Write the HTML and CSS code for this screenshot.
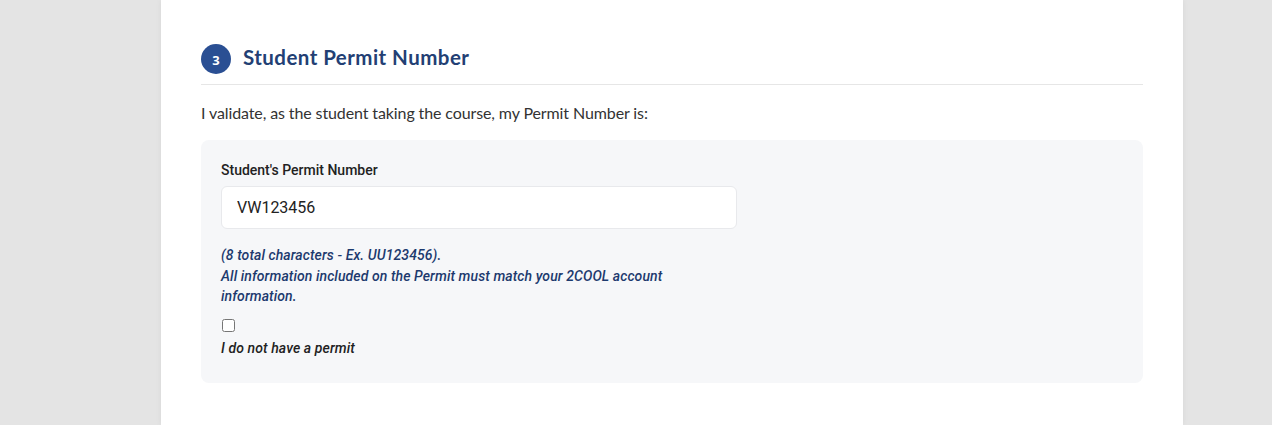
FILE: index.html
```html
<!DOCTYPE html>
<html>
<head>
<meta charset="utf-8">
<link rel="stylesheet" href="styles.css">
</head>
<body>
<div class="page">
  <div class="card">
    <div class="section-head">
      <span class="step">3</span>
      <h2 class="title">Student Permit Number</h2>
    </div>
    <p class="intro">I validate, as the student taking the course, my Permit Number is:</p>
    <div class="panel">
      <label class="field-label" for="permit">Student's Permit Number</label>
      <input class="field-input" id="permit" type="text" value="VW123456">
      <p class="help">(8 total characters - Ex. UU123456).<br>All information included on the Permit must match your 2COOL account information.</p>
      <div class="check-wrap">
        <input class="check" type="checkbox" id="nopermit">
        <label class="check-label" for="nopermit">I do not have a permit</label>
      </div>
    </div>
  </div>
</div>
</body>
</html>
```
FILE: styles.css
```css
html, body {
  margin: 0;
  padding: 0;
  background: #e4e4e4;
}
.page {
  display: flex;
  justify-content: flex-start;
  padding-left: 161px;
  min-height: 425px;
}
.card {
  width: 942px;
  background: #fff;
  padding: 44px 40px 40px;
  box-shadow: 0 0 6px rgba(0,0,0,0.06);
  min-height: 341px;
}
.section-head {
  display: flex;
  align-items: center;
  gap: 12px;
  padding-bottom: 10px;
  border-bottom: 1px solid #e6e6e6;
}
.step {
  width: 30px;
  height: 30px;
  border-radius: 50%;
  background: #2a4f93;
  color: #fff;
  font-family: "Open Sans", sans-serif;
  font-weight: 700;
  font-size: 13px;
  display: flex;
  align-items: center;
  justify-content: center;
  padding-top: 2px;
  box-sizing: border-box;
}
.title {
  margin: 0 0 3px;
  font-family: Lato, sans-serif;
  font-weight: 700;
  font-size: 20.5px;
  letter-spacing: 0.45px;
  color: #233f74;
  line-height: 27px;
}
.intro {
  margin: 16px 0 15px;
  font-family: Lato, sans-serif;
  font-size: 16px;
  letter-spacing: -0.11px;
  line-height: 24px;
  color: #333;
}
.panel {
  background: #f6f7f9;
  border-radius: 8px;
  padding: 20px 20px 25px;
  font-family: Roboto, sans-serif;
}
.field-label {
  display: block;
  font-size: 14px;
  font-weight: 500;
  color: #222;
  line-height: 20px;
}
.field-input {
  display: block;
  margin-top: 6px;
  width: 516px;
  height: 43px;
  box-sizing: border-box;
  border: 1px solid #e8e9ec;
  border-radius: 6px;
  background: #fff;
  padding: 0 15px;
  font-family: Roboto, sans-serif;
  font-size: 16px;
  color: #222;
  outline: none;
}
.help {
  margin: 16px 0 0;
  max-width: 480px;
  font-size: 14px;
  font-style: italic;
  font-weight: 500;
  letter-spacing: 0.09px;
  line-height: 20.5px;
  color: #1d3a6e;
}
.check-wrap {
  margin-top: 9px;
  display: flex;
  flex-direction: column;
  align-items: flex-start;
}
.check {
  margin: 3px 0 0 1px;
  width: 13px;
  height: 13px;
}
.check-label {
  margin-top: 6px;
  font-size: 14px;
  font-style: italic;
  font-weight: 500;
  letter-spacing: 0.1px;
  color: #222;
  line-height: 20px;
}
```
